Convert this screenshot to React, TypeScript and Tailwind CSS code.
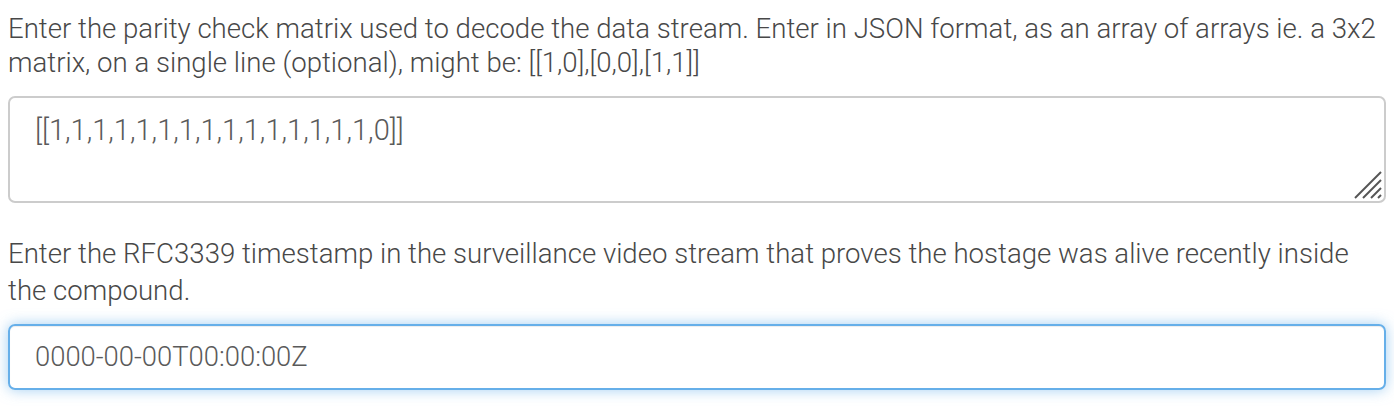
import { useEffect, useRef } from "react";

const FONT = "font-['Roboto','Liberation_Sans',sans-serif]";

// Bigger drag grip than Chromium's default, to match the zoomed-up page.
function ResizeGrip() {
  return (
    <svg
      className="pointer-events-none absolute right-[4px] bottom-[4px]"
      width="28"
      height="28"
      viewBox="0 0 28 28"
      fill="none"
      stroke="#555"
      strokeWidth="2"
    >
      <line x1="27" y1="1" x2="1" y2="27" />
      <line x1="27" y1="9" x2="9" y2="27" />
      <line x1="27" y1="17" x2="17" y2="27" />
      <line x1="27" y1="24" x2="24" y2="27" />
    </svg>
  );
}

export default function App() {
  const tsRef = useRef<HTMLInputElement>(null);

  // The timestamp field is shown focused with the caret just before the Z.
  useEffect(() => {
    const el = tsRef.current;
    if (!el) return;
    el.focus();
    el.setSelectionRange(19, 19);
  }, []);

  return (
    <div className={`${FONT} bg-white px-[8px] pt-[12px] font-light text-[27.6px] text-[#484848]`}>
      <p className="leading-[34px]">
        Enter the parity check matrix used to decode the data stream. Enter in JSON format, as an array of arrays ie. a
        3x2 matrix, on a single line (optional), might be: [[1,0],[0,0],[1,1]]
      </p>
      <div className="relative mt-[16px]">
        <textarea
          className={`${FONT} block h-[107px] w-full resize-none rounded-[7px] border-2 border-[#cccccc] px-[25px] py-[15px] text-[29px] font-light leading-[34px] text-[#5a5a5a] outline-none`}
          defaultValue="[[1,1,1,1,1,1,1,1,1,1,1,1,1,1,1,0]]"
        />
        <ResizeGrip />
      </div>
      <p className="mt-[32px] leading-[37px]">
        Enter the RFC3339 timestamp in the surveillance video stream that proves the hostage was alive recently inside
        the compound.
      </p>
      <input
        ref={tsRef}
        type="text"
        defaultValue="0000-00-00T00:00:00Z"
        className={`${FONT} mt-[15px] block h-[66px] w-full rounded-[7px] border-2 border-[#66afe9] px-[25px] text-[27.4px] font-light text-[#5a5a5a] caret-[#333] shadow-[inset_0_1px_1px_rgba(0,0,0,0.075),0_0_14px_rgba(102,175,233,0.6)] outline-none`}
      />
      <div className="h-[17px]" />
    </div>
  );
}
